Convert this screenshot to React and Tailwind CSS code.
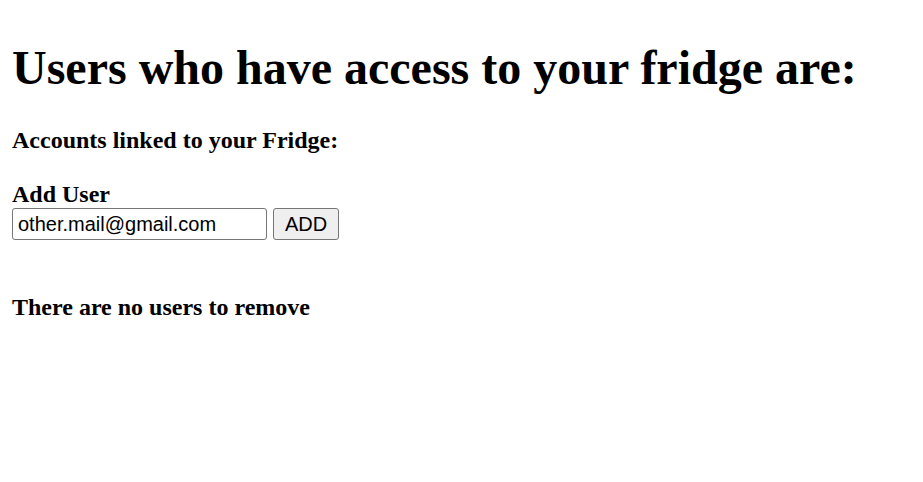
export default function App() {
  return (
    <div className="min-h-screen bg-white text-black px-3">
      <div className="font-['Liberation_Serif',serif]">
        <h1 className="pt-[41px] text-[48px] font-bold leading-[53px]">Users who have access to your fridge are:</h1>
        <h3 className="mt-[32px] text-[24px] font-bold leading-[28px]">Accounts linked to your Fridge:</h3>
        <div className="mt-[26px] text-[24px] font-bold leading-[28px]">Add User</div>
        <div className="flex gap-[6px] font-['Liberation_Sans',sans-serif]">
          <input
            type="text"
            defaultValue="other.mail@gmail.com"
            className="h-[32px] w-[255px] rounded-[3px] border border-[#767676] px-[5px] text-[20px] text-black outline-none"
          />
          <button className="h-[32px] w-[66px] rounded-[3px] border border-[#767676] bg-[#efefef] text-[20px] text-black">
            ADD
          </button>
        </div>
        <h3 className="mt-[53px] text-[24px] font-bold leading-[28px]">There are no users to remove</h3>
      </div>
    </div>
  );
}
